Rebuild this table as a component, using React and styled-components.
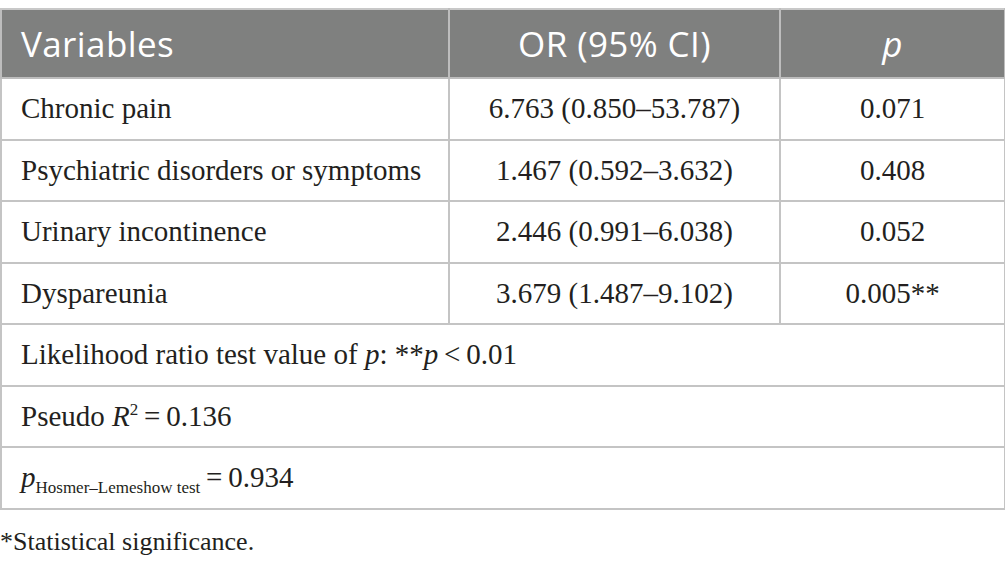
import React from "react";
import styled, { createGlobalStyle } from "styled-components";

const Global = createGlobalStyle`
  html, body { margin: 0; padding: 0; background: #fff; }
  body { padding-top: 8px; }
`;

const Table = styled.table`
  width: 1004px;
  border-collapse: collapse;
  table-layout: fixed;
  font-family: "Liberation Serif", "Times New Roman", serif;
  color: #231f20;
`;

const HeadCell = styled.th`
  background: #7f807f;
  color: #fff;
  font-family: "Open Sans", "Liberation Sans", sans-serif;
  font-weight: 400;
  font-size: 35px;
  letter-spacing: 0.4px;
  height: 67px;
  padding: 0 19px;
  text-align: ${(p) => p.$align || "center"};
  border: 2px solid #bdbdbd;
  border-top-color: #c8c8c8;
`;

const Cell = styled.td`
  height: 59.5px;
  padding: 0 19px;
  font-size: 29px;
  text-align: ${(p) => p.$align || "center"};
  border: 2px solid #c4c4c4;
  white-space: nowrap;
`;

const I = styled.i`
  font-style: italic;
`;

const Sup = styled.sup`
  font-size: 17px;
  vertical-align: 11px;
  line-height: 0;
`;

const Sub = styled.sub`
  font-size: 17px;
  vertical-align: -6px;
  line-height: 0;
  font-style: normal;
`;

const Foot = styled.p`
  margin: 17px 0 0;
  font-family: "Liberation Serif", "Times New Roman", serif;
  font-size: 26px;
  color: #231f20;
`;

const rows = [
  ["Chronic pain", "6.763 (0.850–53.787)", "0.071"],
  ["Psychiatric disorders or symptoms", "1.467 (0.592–3.632)", "0.408"],
  ["Urinary incontinence", "2.446 (0.991–6.038)", "0.052"],
  ["Dyspareunia", "3.679 (1.487–9.102)", "0.005**"],
];

export default function App() {
  return (
    <>
      <Global />
      <Table>
        <colgroup>
          <col style={{ width: 448 }} />
          <col style={{ width: 331 }} />
          <col style={{ width: 225 }} />
        </colgroup>
        <thead>
          <tr>
            <HeadCell $align="left">Variables</HeadCell>
            <HeadCell>OR (95% CI)</HeadCell>
            <HeadCell><I>p</I></HeadCell>
          </tr>
        </thead>
        <tbody>
          {rows.map((r) => (
            <tr key={r[0]}>
              <Cell $align="left">{r[0]}</Cell>
              <Cell>{r[1]}</Cell>
              <Cell>{r[2]}</Cell>
            </tr>
          ))}
          <tr>
            <Cell $align="left" colSpan={3}>
              Likelihood ratio test value of <I>p</I>: **<I>p</I>{"\u2009<\u20090.01"}
            </Cell>
          </tr>
          <tr>
            <Cell $align="left" colSpan={3}>
              Pseudo <I>R</I><Sup>2</Sup>{"\u2009=\u20090.136"}
            </Cell>
          </tr>
          <tr>
            <Cell $align="left" colSpan={3}>
              <I>p</I><Sub>Hosmer–Lemeshow test</Sub>{"\u2009=\u20090.934"}
            </Cell>
          </tr>
        </tbody>
      </Table>
      <Foot>*Statistical significance.</Foot>
    </>
  );
}
